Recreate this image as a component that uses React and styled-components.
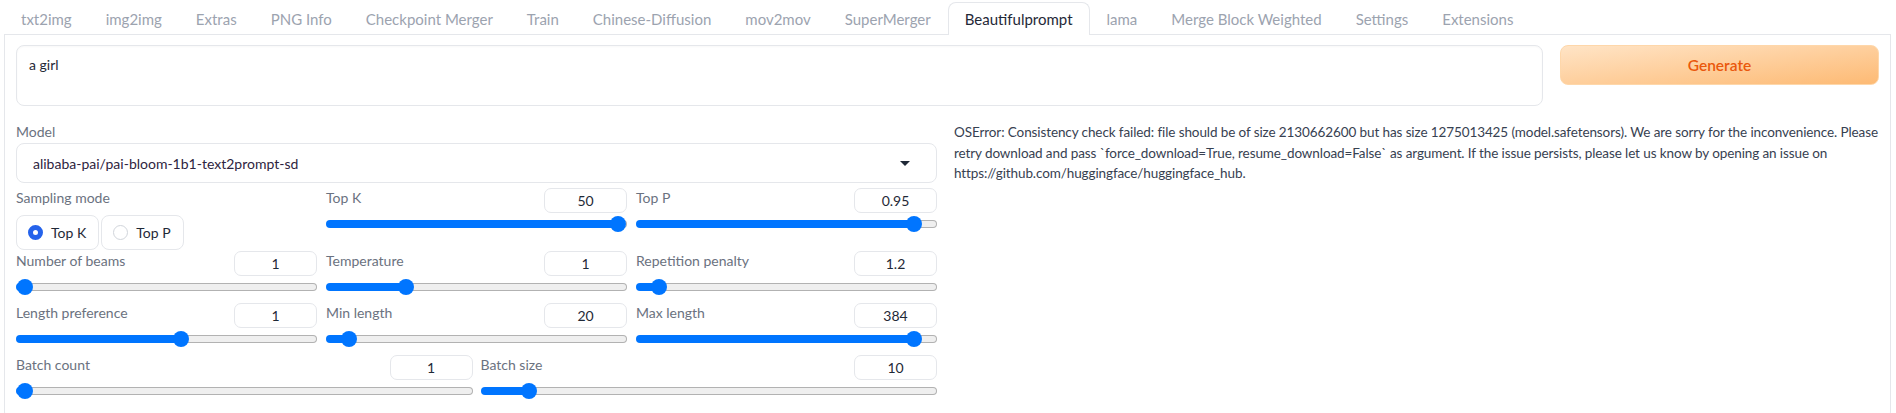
import React from 'react';
import styled, { createGlobalStyle } from 'styled-components';

const GlobalStyle = createGlobalStyle`
  body {
    margin: 0;
    background: #fff;
    font-family: Lato, "Noto Sans", sans-serif;
  }
`;

const Page = styled.div`
  padding: 0 5px 0 4px;
`;

const TabBar = styled.div`
  display: flex;
  padding-top: 2px;
  border-bottom: 1px solid #e5e7eb;
`;

const Tab = styled.button`
  padding: 0 16px;
  margin-bottom: -1px;
  font-family: inherit;
  font-size: 15px;
  background: ${(p) => (p.$active ? '#fff' : 'transparent')};
  color: ${(p) => (p.$active ? '#1f2937' : '#9ca3af')};
  border: 1px solid ${(p) => (p.$active ? '#e5e7eb' : 'transparent')};
  border-bottom: none;
  border-radius: 8px 8px 0 0;
  height: ${(p) => (p.$active ? '33px' : '32px')};
`;

const Panel = styled.div`
  border: 1px solid #e5e7eb;
  border-top: none;
  padding: 10px 11px 12px;
  border-radius: 0 0 8px 8px;
`;

const TopRow = styled.div`
  display: flex;
  gap: 17px;
  align-items: flex-start;
`;

const Prompt = styled.div`
  flex: 1;
  height: 61px;
  box-sizing: border-box;
  border: 1px solid #e5e7eb;
  border-radius: 8px;
  padding: 10px 12px;
  font-size: 14px;
  color: #1f2937;
  box-shadow: inset 0 1px 2px rgba(0, 0, 0, 0.03);
`;

const GenerateButton = styled.button`
  width: 319px;
  height: 40px;
  border: 1px solid #fed7aa;
  border-radius: 8px;
  background: linear-gradient(to bottom right, #ffe4c6, #fdba74);
  color: #ea580c;
  font-family: inherit;
  font-size: 15.5px;
  font-weight: 600;
`;

const Main = styled.div`
  display: grid;
  grid-template-columns: 921px 1fr;
  gap: 17px;
  margin-top: 16px;
`;

const Column = styled.div`
  display: flex;
  flex-direction: column;
`;

const Label = styled.div`
  font-size: 14px;
  line-height: 20px;
  color: #6b7280;
`;

const Dropdown = styled.div`
  display: flex;
  align-items: center;
  justify-content: space-between;
  height: 40px;
  box-sizing: border-box;
  margin-top: 1px;
  padding: 0 26px 0 16px;
  border: 1px solid #e5e7eb;
  border-radius: 8px;
  font-size: 14px;
  color: #2e2440;
`;

const Caret = styled.span`
  width: 0;
  height: 0;
  border-left: 5px solid transparent;
  border-right: 5px solid transparent;
  border-top: 5px solid #1f2937;
`;

const Row = styled.div`
  display: grid;
  grid-template-columns: repeat(${(p) => p.$cols}, 1fr);
  column-gap: ${(p) => (p.$cols === 3 ? '9px' : '8px')};
  margin-top: ${(p) => p.$top || 0}px;
`;

const Block = styled.div`
  display: flex;
  flex-direction: column;
  height: ${(p) => p.$h || 52}px;
`;

const BlockHead = styled.div`
  display: flex;
  justify-content: space-between;
  align-items: flex-start;
  height: 26px;
`;

const NumberBox = styled.input`
  width: 83px;
  height: 25px;
  box-sizing: border-box;
  border: 1px solid #e5e7eb;
  border-radius: 7px;
  text-align: center;
  font-family: inherit;
  font-size: 14px;
  color: #1f2937;
  outline: none;
`;

const Range = styled.input.attrs({ type: 'range', min: 0, max: 100 })`
  appearance: none;
  -webkit-appearance: none;
  width: 100%;
  height: 16px;
  margin: 2px 0 0;
  background: transparent;

  &::-webkit-slider-runnable-track {
    height: 8px;
    border-radius: 4px;
    border: 1px solid transparent;
    background:
      linear-gradient(
          to right,
          #0075ff calc(8px + (100% - 16px) * ${(p) => p.$pct}),
          transparent calc(8px + (100% - 16px) * ${(p) => p.$pct})
        )
        border-box,
      linear-gradient(#efefef, #efefef) padding-box,
      linear-gradient(#b2b2b2, #b2b2b2) border-box;
  }

  &::-webkit-slider-thumb {
    -webkit-appearance: none;
    width: 16px;
    height: 16px;
    margin-top: -5px;
    border: none;
    border-radius: 50%;
    background: #0075ff;
  }
`;

const RadioGroup = styled.div`
  display: flex;
  gap: 2px;
  margin-top: 7px;
`;

const RadioItem = styled.div`
  display: flex;
  align-items: center;
  gap: 8px;
  height: 35px;
  box-sizing: border-box;
  padding: 0 12px 0 11px;
  border: 1px solid #e5e7eb;
  border-radius: 8px;
  background: #fff;
  font-size: 14px;
  color: #1f2937;
`;

const RadioDot = styled.span`
  width: 15px;
  height: 15px;
  box-sizing: border-box;
  border-radius: 50%;
  background: #fff;
  border: ${(p) => (p.$checked ? '5px solid #2563eb' : '1px solid #d1d5db')};
`;

const ErrorText = styled.div`
  font-size: 13.5px;
  letter-spacing: -0.1px;
  line-height: 20.5px;
  color: #374151;
`;

const tabs = [
  'txt2img',
  'img2img',
  'Extras',
  'PNG Info',
  'Checkpoint Merger',
  'Train',
  'Chinese-Diffusion',
  'mov2mov',
  'SuperMerger',
  'Beautifulprompt',
  'lama',
  'Merge Block Weighted',
  'Settings',
  'Extensions',
];

const Slider = ({ label, value, pct }) => (
  <Block>
    <BlockHead>
      <Label>{label}</Label>
      <NumberBox defaultValue={value} />
    </BlockHead>
    <Range $pct={pct} defaultValue={pct * 100} />
  </Block>
);

const App = () => {
  return (
    <Page>
      <GlobalStyle />
      <TabBar>
        {tabs.map((t) => (
          <Tab key={t} $active={t === 'Beautifulprompt'}>
            {t}
          </Tab>
        ))}
      </TabBar>
      <Panel>
        <TopRow>
          <Prompt>a girl</Prompt>
          <GenerateButton>Generate</GenerateButton>
        </TopRow>
        <Main>
          <Column>
            <Label>Model</Label>
            <Dropdown>
              alibaba-pai/pai-bloom-1b1-text2prompt-sd
              <Caret />
            </Dropdown>
            <Row $cols={3} $top={5}>
              <Block $h={63}>
                <Label>Sampling mode</Label>
                <RadioGroup>
                  <RadioItem>
                    <RadioDot $checked />
                    Top K
                  </RadioItem>
                  <RadioItem>
                    <RadioDot />
                    Top P
                  </RadioItem>
                </RadioGroup>
              </Block>
              <Slider label="Top K" value="50" pct={1} />
              <Slider label="Top P" value="0.95" pct={0.95} />
            </Row>
            <Row $cols={3}>
              <Slider label="Number of beams" value="1" pct={0} />
              <Slider label="Temperature" value="1" pct={0.25} />
              <Slider label="Repetition penalty" value="1.2" pct={0.05} />
            </Row>
            <Row $cols={3}>
              <Slider label="Length preference" value="1" pct={0.55} />
              <Slider label="Min length" value="20" pct={0.05} />
              <Slider label="Max length" value="384" pct={0.95} />
            </Row>
            <Row $cols={2}>
              <Slider label="Batch count" value="1" pct={0} />
              <Slider label="Batch size" value="10" pct={0.09} />
            </Row>
          </Column>
          <Column>
            <ErrorText>
              OSError: Consistency check failed: file should be of size 2130662600 but has size 1275013425
              (model.safetensors). We are sorry for the inconvenience. Please retry download and pass
              `force_download=True, resume_download=False` as argument. If the issue persists, please let us
              know by opening an issue on https://github.com/huggingface/huggingface_hub.
            </ErrorText>
          </Column>
        </Main>
      </Panel>
    </Page>
  );
};

export default App;
